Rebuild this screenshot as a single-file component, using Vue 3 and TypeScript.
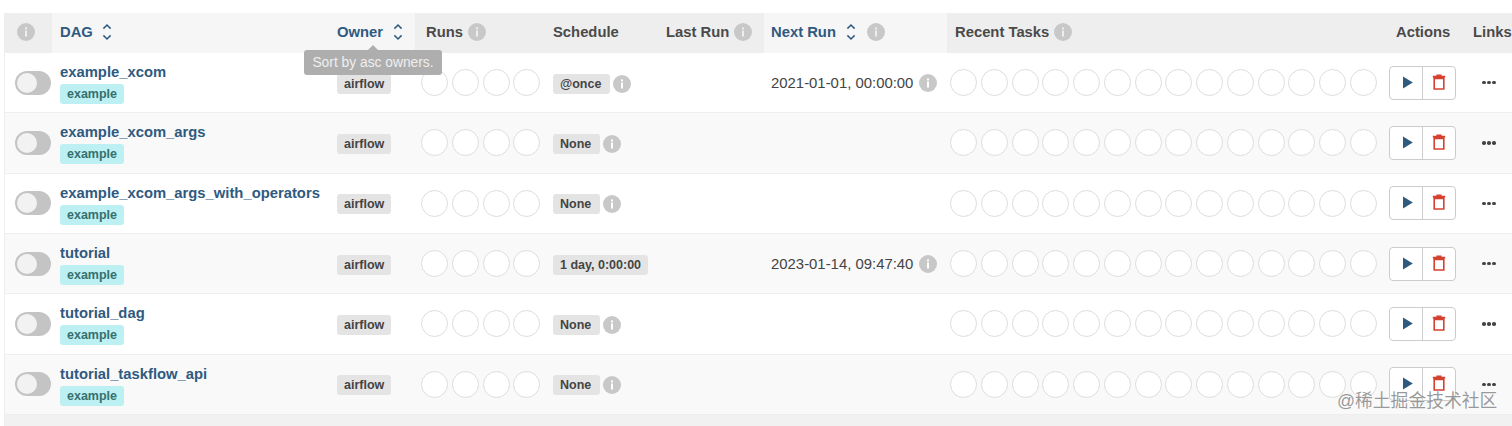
<script setup lang="ts">
interface Dag {
  name: string
  schedule: string
  scheduleInfo: boolean
  next: string
}
const dags: Dag[] = [
  { name: 'example_xcom', schedule: '@once', scheduleInfo: true, next: '2021-01-01, 00:00:00' },
  { name: 'example_xcom_args', schedule: 'None', scheduleInfo: true, next: '' },
  { name: 'example_xcom_args_with_operators', schedule: 'None', scheduleInfo: true, next: '' },
  { name: 'tutorial', schedule: '1 day, 0:00:00', scheduleInfo: false, next: '2023-01-14, 09:47:40' },
  { name: 'tutorial_dag', schedule: 'None', scheduleInfo: true, next: '' },
  { name: 'tutorial_taskflow_api', schedule: 'None', scheduleInfo: true, next: '' },
]
</script>

<template>
  <div class="page">
    <div class="table">
      <div class="grid head">
        <div class="hc dark first"><svg class="info" viewBox="0 0 18 18"><circle cx="9" cy="9" r="9" /><rect x="8" y="7.5" width="2" height="6" /><rect x="8" y="4.4" width="2" height="2" /></svg></div>
        <div class="hc light link">DAG<svg class="sort" viewBox="0 0 12 20"><path d="M2.4 6.6L6 3l3.6 3.6M2.4 13.4L6 17l3.6-3.6" /></svg></div>
        <div class="hc light link wide-sort">Owner<svg class="sort" viewBox="0 0 12 20"><path d="M2.4 6.6L6 3l3.6 3.6M2.4 13.4L6 17l3.6-3.6" /></svg></div>
        <div class="hc dark runs-h">Runs<svg class="info gap" viewBox="0 0 18 18"><circle cx="9" cy="9" r="9" /><rect x="8" y="7.5" width="2" height="6" /><rect x="8" y="4.4" width="2" height="2" /></svg></div>
        <div class="hc dark">Schedule</div>
        <div class="hc dark">Last Run<svg class="info gap" viewBox="0 0 18 18"><circle cx="9" cy="9" r="9" /><rect x="8" y="7.5" width="2" height="6" /><rect x="8" y="4.4" width="2" height="2" /></svg></div>
        <div class="hc light link next-h wide-sort">Next Run<svg class="sort" viewBox="0 0 12 20"><path d="M2.4 6.6L6 3l3.6 3.6M2.4 13.4L6 17l3.6-3.6" /></svg><svg class="info gap2" viewBox="0 0 18 18"><circle cx="9" cy="9" r="9" /><rect x="8" y="7.5" width="2" height="6" /><rect x="8" y="4.4" width="2" height="2" /></svg></div>
        <div class="hc dark">Recent Tasks<svg class="info gap" viewBox="0 0 18 18"><circle cx="9" cy="9" r="9" /><rect x="8" y="7.5" width="2" height="6" /><rect x="8" y="4.4" width="2" height="2" /></svg></div>
        <div class="hc dark">Actions</div>
        <div class="hc dark">Links</div>
      </div>

      <div v-for="dag in dags" :key="dag.name" class="grid row">
        <div class="cell toggle-cell"><span class="toggle"><span class="knob"></span></span></div>
        <div class="cell stack">
          <a class="name">{{ dag.name }}</a>
          <span class="tag">example</span>
        </div>
        <div class="cell low"><span class="label">airflow</span></div>
        <div class="cell runs"><span v-for="n in 4" :key="n" class="dot"></span></div>
        <div class="cell low">
          <span class="label" :class="{ sched: dag.scheduleInfo }">{{ dag.schedule }}</span>
          <svg v-if="dag.scheduleInfo" class="info tiny" viewBox="0 0 18 18"><circle cx="9" cy="9" r="9" /><rect x="8" y="7.5" width="2" height="6" /><rect x="8" y="4.4" width="2" height="2" /></svg>
        </div>
        <div class="cell"></div>
        <div class="cell next">
          <template v-if="dag.next">
            <span>{{ dag.next }}</span>
            <svg class="info tiny" viewBox="0 0 18 18"><circle cx="9" cy="9" r="9" /><rect x="8" y="7.5" width="2" height="6" /><rect x="8" y="4.4" width="2" height="2" /></svg>
          </template>
        </div>
        <div class="cell tasks"><span v-for="n in 14" :key="n" class="dot"></span></div>
        <div class="cell actions">
          <div class="btns">
            <button class="btn"><svg width="14" height="16" viewBox="0 0 14 16"><path d="M4 1.5L13.8 7.5 4 13.5z" fill="#2f5a80" /></svg></button>
            <button class="btn"><svg width="16" height="18" viewBox="0 0 16 18"><path d="M3.2 4.4h9.6v10.6H3.2zM1.8 2.6h12.4M5.4 1.2h5.2" fill="none" stroke="#d5402f" stroke-width="1.6" /></svg></button>
          </div>
        </div>
        <div class="cell more"><span></span><span></span><span></span></div>
      </div>
      <div class="foot"></div>
    </div>

    <div class="tooltip">Sort by asc owners.</div>
    <div class="mark">@稀土掘金技术社区</div>
  </div>
</template>

<style scoped>
.page {
  position: relative;
  width: 1512px;
  height: 426px;
  padding: 13px 0 0 4px;
  box-sizing: border-box;
  overflow: hidden;
  background: #fff;
  font-family: "Liberation Sans", Arial, sans-serif;
  color: #444;
}
.table {
  border-left: 1px solid #eee;
  height: 413px;
}
.grid {
  display: grid;
  grid-template-columns: 47px 277px 86px 130px 113px 106px 183px 441px 77px 1fr;
}
.head {
  height: 40px;
}
.hc {
  display: flex;
  align-items: center;
  padding: 0 0 2px 8px;
  font-size: 14.8px;
  font-weight: 700;
  color: #4a4a4a;
  white-space: nowrap;
  overflow: hidden;
}
.dark { background: #eee; }
.light { background: #f6f6f6; }
.hc.link { color: #2f5a80; }
.hc.first { padding-left: 12px; }
.runs-h { padding-left: 11px; }
.next-h { padding-left: 7px; }
.sort {
  width: 12px;
  height: 20px;
  margin-left: 8px;
  fill: none;
  stroke: #2f5a80;
  stroke-width: 1.5;
}
.wide-sort .sort { margin-left: 9px; }
.info {
  width: 18px;
  height: 18px;
  fill: #c8c8c8;
  flex: none;
}
.info rect { fill: #eee; }
.gap { margin-left: 5px; }
.gap2 { margin-left: 10px; }
.tiny { margin-left: 2.5px; }
.tiny rect { fill: #fff; }

.row {
  height: 60.33px;
  box-sizing: border-box;
  border-bottom: 1px solid #eee;
  background: #fff;
}
.row:nth-of-type(odd) { background: #f9f9f9; }
.row:last-of-type { border-bottom: 0; }
.cell {
  display: flex;
  align-items: center;
  padding-left: 8px;
  min-width: 0;
}
.cell.low { padding-top: 2px; }
.cell.toggle-cell { padding-left: 10px; }
.toggle {
  display: block;
  width: 36px;
  height: 24px;
  border-radius: 12px;
  background: #c4c4c4;
  position: relative;
}
.knob {
  position: absolute;
  left: 2px;
  top: 2px;
  width: 20px;
  height: 20px;
  border-radius: 50%;
  background: #f2f2f2;
}
.stack {
  flex-direction: column;
  align-items: flex-start;
  justify-content: center;
  padding-top: 1px;
}
.name {
  font-size: 14.8px;
  line-height: 20px;
  font-weight: 700;
  color: #2f5a80;
  white-space: nowrap;
}
.tag {
  margin-top: 2px;
  height: 20px;
  line-height: 20px;
  padding: 0 7px;
  background: #bdf0f2;
  border-radius: 3px;
  font-size: 12.5px;
  font-weight: 700;
  color: #35706f;
}
.label {
  height: 20px;
  line-height: 20px;
  padding: 0 7px;
  background: #e4e4e4;
  border-radius: 3px;
  font-size: 12.5px;
  font-weight: 700;
  color: #444;
  white-space: nowrap;
}
.label.sched { padding-right: 9px; }
.next {
  font-size: 14.9px;
  color: #444;
  white-space: nowrap;
  padding-left: 7px;
}
.next .tiny { margin-left: 6px; }
.runs, .tasks {
  gap: 3.75px;
  padding-left: 6px;
}
.tasks { padding-left: 3px; }
.dot {
  flex: none;
  width: 27px;
  height: 27px;
  box-sizing: border-box;
  border-radius: 50%;
  border: 1px solid #ddd;
  background: #fff;
}
.cell.actions { padding-left: 1px; }
.btns {
  display: flex;
  width: 67px;
  height: 34px;
  box-sizing: border-box;
  border: 1px solid #ccc;
  border-radius: 4px;
  background: #fff;
}
.btn {
  flex: 1;
  padding: 0;
  border: 0;
  background: transparent;
  display: flex;
  align-items: center;
  justify-content: center;
}
.btn + .btn { border-left: 1px solid #ccc; }
.more { gap: 1.5px; padding-left: 17px; }
.more span {
  width: 3.5px;
  height: 3.5px;
  border-radius: 50%;
  background: #444;
}
.foot {
  height: 11px;
  background: #f1f1f1;
}
.tooltip {
  position: absolute;
  left: 304px;
  top: 49.5px;
  width: 138px;
  height: 25px;
  line-height: 25px;
  text-align: center;
  font-size: 13.8px;
  color: #eee;
  background: #aeaeae;
  border-radius: 3px;
  white-space: nowrap;
}
.tooltip::before {
  content: "";
  position: absolute;
  left: 64px;
  top: -5px;
  border: 5px solid transparent;
  border-top: 0;
  border-bottom-color: #aeaeae;
}
.mark {
  position: absolute;
  left: 1337px;
  top: 389px;
  font-family: "Liberation Sans", "Noto Sans CJK SC", sans-serif;
  font-size: 17.8px;
  line-height: 24px;
  color: rgba(120, 120, 120, 0.75);
  text-shadow: 0 0 1px rgba(255, 255, 255, 0.8);
  white-space: nowrap;
}
</style>
